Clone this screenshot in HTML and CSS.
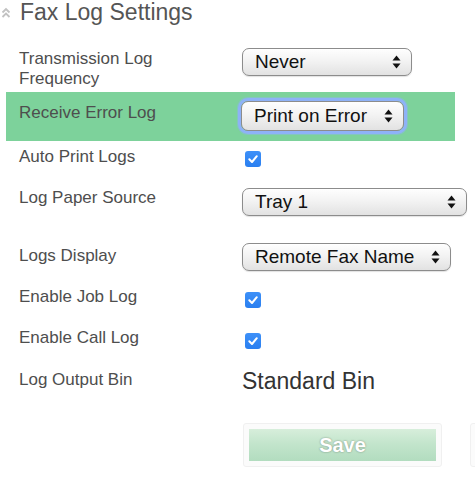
FILE: index.html
```html
<!DOCTYPE html>
<html>
<head>
<meta charset="utf-8">
<link rel="stylesheet" href="styles.css">
</head>
<body>
<div class="page">
  <h1 class="title">
    <svg class="chev" width="10" height="13" viewBox="0 0 10 13"><polyline points="1.5,6.5 5,3 8.5,6.5" fill="none" stroke="#c2c2c2" stroke-width="1.8"/><polyline points="1.5,11 5,7.5 8.5,11" fill="none" stroke="#c2c2c2" stroke-width="1.8"/></svg>
    <span>Fax Log Settings</span>
  </h1>

  <div class="row r1">
    <div class="label">Transmission Log<br>Frequency</div>
    <div class="ctl">
      <div class="select w-never"><span>Never</span><svg class="arr" width="9" height="14" viewBox="0 0 9 14"><polygon points="4.5,0.5 8.5,5.5 0.5,5.5" fill="#111"/><polygon points="0.5,8.5 8.5,8.5 4.5,13.5" fill="#111"/></svg></div>
    </div>
  </div>

  <div class="row r2 hl">
    <div class="label">Receive Error Log</div>
    <div class="ctl">
      <div class="select focus w-print"><span>Print on Error</span><svg class="arr" width="9" height="14" viewBox="0 0 9 14"><polygon points="4.5,0.5 8.5,5.5 0.5,5.5" fill="#111"/><polygon points="0.5,8.5 8.5,8.5 4.5,13.5" fill="#111"/></svg></div>
    </div>
  </div>

  <div class="row r3">
    <div class="label">Auto Print Logs</div>
    <div class="ctl"><span class="check"><svg width="12" height="12" viewBox="0 0 12 12"><polyline points="2.3,6.3 5,9 9.8,3.2" fill="none" stroke="#fff" stroke-width="2" stroke-linecap="round" stroke-linejoin="round"/></svg></span></div>
  </div>

  <div class="row r4">
    <div class="label">Log Paper Source</div>
    <div class="ctl">
      <div class="select w-tray"><span>Tray 1</span><svg class="arr" width="9" height="14" viewBox="0 0 9 14"><polygon points="4.5,0.5 8.5,5.5 0.5,5.5" fill="#111"/><polygon points="0.5,8.5 8.5,8.5 4.5,13.5" fill="#111"/></svg></div>
    </div>
  </div>

  <div class="row r5">
    <div class="label">Logs Display</div>
    <div class="ctl">
      <div class="select w-remote"><span>Remote Fax Name</span><svg class="arr" width="9" height="14" viewBox="0 0 9 14"><polygon points="4.5,0.5 8.5,5.5 0.5,5.5" fill="#111"/><polygon points="0.5,8.5 8.5,8.5 4.5,13.5" fill="#111"/></svg></div>
    </div>
  </div>

  <div class="row r6">
    <div class="label">Enable Job Log</div>
    <div class="ctl"><span class="check"><svg width="12" height="12" viewBox="0 0 12 12"><polyline points="2.3,6.3 5,9 9.8,3.2" fill="none" stroke="#fff" stroke-width="2" stroke-linecap="round" stroke-linejoin="round"/></svg></span></div>
  </div>

  <div class="row r7">
    <div class="label">Enable Call Log</div>
    <div class="ctl"><span class="check"><svg width="12" height="12" viewBox="0 0 12 12"><polyline points="2.3,6.3 5,9 9.8,3.2" fill="none" stroke="#fff" stroke-width="2" stroke-linecap="round" stroke-linejoin="round"/></svg></span></div>
  </div>

  <div class="row r8">
    <div class="label">Log Output Bin</div>
    <div class="ctl"><span class="static">Standard Bin</span></div>
  </div>

  <div class="actions">
    <div class="btn-frame"><button class="btn">Save</button></div>
    <div class="btn-frame ghost"></div>
  </div>
</div>
</body>
</html>
```

FILE: styles.css
```css
html, body {
  margin: 0;
  padding: 0;
  background: #fff;
  overflow: hidden;
}
body {
  font-family: "Liberation Sans", Arial, sans-serif;
  width: 475px;
  height: 487px;
}
.page {
  display: flex;
  flex-direction: column;
}
.title {
  margin: 0;
  height: 40px;
  display: flex;
  align-items: flex-start;
  gap: 9px;
  font-size: 23px;
  font-weight: normal;
  color: #555;
  line-height: 25px;
  padding-left: 1px;
}
.title .chev {
  margin-top: 6px;
}
.row {
  display: grid;
  grid-template-columns: 223px 1fr;
  align-items: start;
  margin-left: 6px;
  width: 449px;
  padding-left: 13px;
  box-sizing: border-box;
}
.label {
  font-size: 17px;
  line-height: 20px;
  padding-top: 1px;
  color: #4e4e4e;
}
.hl {
  background: #7dd29b;
}
.ctl {
  display: flex;
  align-items: flex-start;
}
.r1 { height: 52px; padding-top: 8px; }
.r2 { height: 49px; padding-top: 10px; }
.r2 .ctl { margin-top: -1px; margin-left: -1px; }
.r3 { height: 37px; padding-top: 5px; }
.r3 .ctl { margin-top: 5px; margin-left: 3px; }
.r4 { height: 52px; padding-top: 9px; }
.r4 .ctl { margin-top: 1px; }
.r5 { height: 50px; padding-top: 15px; }
.r5 .ctl { margin-top: -2px; }
.r6 { height: 38px; padding-top: 6px; }
.r6 .ctl { margin-top: 6px; margin-left: 3px; }
.r7 { height: 42px; padding-top: 9px; }
.r7 .ctl { margin-top: 6px; margin-left: 3px; }
.r8 { height: 40px; padding-top: 9px; }
.r8 .ctl { margin-top: -1px; }

.select {
  box-sizing: border-box;
  height: 28px;
  border: 1px solid #8c8c8c;
  border-radius: 7px;
  background: linear-gradient(#fefefe 0%, #f3f3f3 45%, #e2e2e2 100%);
  box-shadow: inset 0 1px 0 #fff, 0 1px 1px rgba(0,0,0,0.12);
  display: flex;
  align-items: center;
  justify-content: space-between;
  padding: 0 10px 0 12px;
  font-size: 19px;
  color: #111;
}
.select span {
  line-height: 22px;
}
.select.focus {
  height: 30px;
  box-shadow: 0 0 0 3px #8eb2f7, 0 0 0 4px rgba(142,178,247,0.4);
}
.w-never { width: 170px; }
.w-print { width: 163px; }
.w-tray { width: 225px; }
.w-remote { width: 209px; }

.check {
  width: 16px;
  height: 16px;
  border-radius: 3px;
  background: linear-gradient(#3d90f8, #2a7ff0);
  display: flex;
  align-items: center;
  justify-content: center;
}
.static {
  font-size: 23px;
  line-height: 26px;
  color: #333;
}

.actions {
  display: flex;
  gap: 28px;
  padding-left: 243px;
  margin-top: 23px;
}
.btn-frame {
  flex: none;
  box-sizing: border-box;
  width: 199px;
  height: 44px;
  padding: 5px;
  background: #fbfbfb;
  border: 1px solid #f0f0f0;
  border-radius: 3px;
}
.btn {
  display: block;
  width: 100%;
  height: 100%;
  border: none;
  margin: 0;
  padding: 0;
  background: linear-gradient(#d7eedb 0%, #c3e5cc 45%, #b2dcbf 100%);
  color: #fff;
  font-family: "Liberation Sans", Arial, sans-serif;
  font-weight: bold;
  font-size: 20px;
  text-shadow: 0 0 2px rgba(0,0,0,0.4);
}
.ghost {
  width: 5px;
}
```
